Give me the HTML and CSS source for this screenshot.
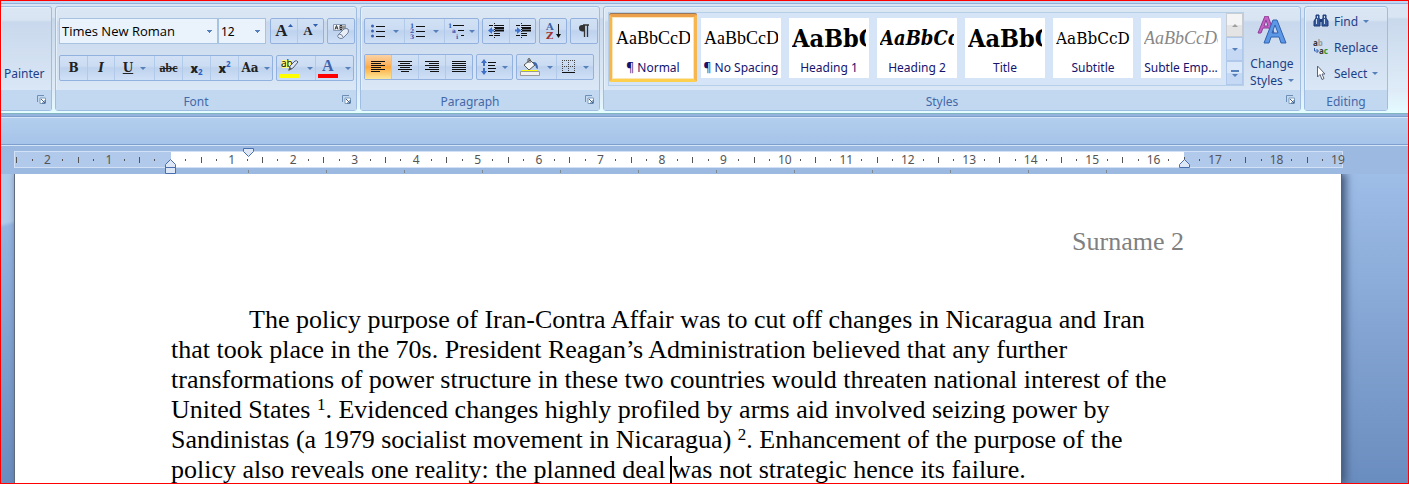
FILE: index.html
```
<!DOCTYPE html>
<html lang="en">
<head>
  <meta charset="UTF-8" />
  <meta name="viewport" content="width=device-width, initial-scale=1.0"/>
  <title>Document</title>
  <link rel="stylesheet" href="styles.css">
</head>
<body>

<header class="ribbon">
  <section class="group clipboard">
    <div class="group-body"><button class="link-btn">Painter</button></div>
    <div class="group-label"><button class="launcher" aria-label="Clipboard options"><svg width="9" height="9" viewBox="0 0 9 9"><path d="M.5 7V.5H7" fill="none" stroke="#6d8fb5"/><path d="M3 3h5.500v5.500H3z" fill="#fff" stroke="#7f9cbd"/><path d="M4 4l4 4M8 5v3H5" stroke="#40658f" fill="none"/></svg></button></div>
  </section>

  <section class="group font">
    <div class="group-body">
      <div class="row">
        <div class="combos">
          <select class="font-name" aria-label="Font"><option>Times New Roman</option></select>
          <select class="font-size" aria-label="Font size"><option>12</option></select>
        </div>
        <div class="set">
          <button class="b26" aria-label="Grow font"><span class="serif big">A</span><svg class="caret" width="5" height="3" viewBox="0 0 5 3"><path d="M0 3L2.500 0 5 3z" fill="#2f5fae"/></svg></button>
          <button class="b26" aria-label="Shrink font"><span class="serif small">A</span><svg class="caret" width="5" height="3" viewBox="0 0 5 3"><path d="M0 0L2.500 3 5 0z" fill="#2f5fae"/></svg></button>
        </div>
        <div class="set">
          <button class="b26" aria-label="Clear formatting"><svg width="18" height="18" viewBox="0 0 18 18"><path d="M1.500 2.500h12v6h-12z" fill="#f4f8fd" stroke="#8a9db8"/><path d="M3 7.500l1.500-4L6 7.500M3.500 6h2M8 3.500h2v4H8zM8 5.500h2M12 3.500v4" fill="none" stroke="#333"/><path d="M6 13l6-6q2-1 4 0 1 2 0 4l-5 5q-2 1-4 0-2-1-1-3z" fill="#e9eef6" stroke="#6e7f9c"/><path d="M7 12q3 0 4 3" fill="none" stroke="#6e7f9c"/></svg></button>
        </div>
      </div>
      <div class="row">
        <div class="set">
          <button class="b27 serif"><b>B</b></button>
          <button class="b27 serif"><b><i>I</i></b></button>
          <button class="b40 serif"><b><u>U</u></b><span class="arrow"></span></button>
          <button class="b28 serif strike"><s>abc</s></button>
          <button class="b28 script"><b>x</b><sub>2</sub></button>
          <button class="b28 script"><b>x</b><sup>2</sup></button>
          <button class="b34 serif"><b>Aa</b><span class="arrow"></span></button>
        </div>
        <div class="set">
          <button class="b38" aria-label="Highlight"><svg width="20" height="20" viewBox="0 0 20 20"><path d="M2 2h10v8H2z" fill="#ffff7a"/><text x="1" y="9" class="hl">ab</text><path d="M9 12l1-4 5-5q2-1 3 1l-5 6z" fill="#dfe6f1" stroke="#4d5c78"/><path d="M8 13l2-4 2 2z" fill="#555"/><path d="M0 16h20v4H0z" fill="#ff0"/></svg><span class="arrow"></span></button>
          <button class="b38" aria-label="Font color"><svg width="20" height="20" viewBox="0 0 20 20"><text x="4" y="13" class="fc">A</text><path d="M0 16h20v4H0z" fill="#f00"/></svg><span class="arrow"></span></button>
        </div>
      </div>
    </div>
    <div class="group-label"><span>Font</span><button class="launcher" aria-label="Font options"><svg width="9" height="9" viewBox="0 0 9 9"><path d="M.5 7V.5H7" fill="none" stroke="#6d8fb5"/><path d="M3 3h5.500v5.500H3z" fill="#fff" stroke="#7f9cbd"/><path d="M4 4l4 4M8 5v3H5" stroke="#40658f" fill="none"/></svg></button></div>
  </section>

  <section class="group paragraph">
    <div class="group-body">
      <div class="row">
        <div class="set">
          <button class="b39" aria-label="Bullets"><svg width="16" height="16" viewBox="0 0 16 16"><g fill="#3a62b8"><circle cx="2.500" cy="3" r="1.500"/><circle cx="2.500" cy="8" r="1.500"/><circle cx="2.500" cy="13" r="1.500"/></g><path d="M6 3.500h9M6 8.500h9M6 13.500h9" stroke="#111"/></svg><span class="arrow"></span></button>
          <button class="b40" aria-label="Numbering"><svg width="16" height="16" viewBox="0 0 16 16"><g class="num"><text x="0" y="5">1</text><text x="0" y="10">2</text><text x="0" y="16">3</text></g><path d="M6 3.500h9M6 8.500h9M6 13.500h9" stroke="#111"/></svg><span class="arrow"></span></button>
          <button class="b34" aria-label="Multilevel list"><svg width="16" height="16" viewBox="0 0 16 16"><g class="num"><text x="0" y="5">1</text><text x="4" y="10">a</text><text x="8" y="16">i</text></g><path d="M5 2.500h11M10 7.500h6M13 12.500h3" stroke="#111"/></svg><span class="arrow"></span></button>
        </div>
        <div class="set">
          <button class="b26" aria-label="Decrease indent"><svg width="16" height="16" viewBox="0 0 16 16"><path d="M1 2.500h4M7 2.500h9M1 12.500h4M7 12.500h5" stroke="#111"/><path d="M7 5h9M7 7.500h9" stroke="#111" stroke-width="2"/><path d="M7 10.500h5" stroke="#111"/><path d="M6.500 0v16" stroke="#222" stroke-dasharray="1 1"/><path d="M0 7.500L4 4v2.500h2v2H4V11z" fill="#3f74d2"/></svg></button>
          <button class="b26" aria-label="Increase indent"><svg width="16" height="16" viewBox="0 0 16 16"><path d="M1 2.500h4M7 2.500h9M1 12.500h4M7 12.500h5" stroke="#111"/><path d="M7 5h9M7 7.500h9" stroke="#111" stroke-width="2"/><path d="M7 10.500h5" stroke="#111"/><path d="M6.500 0v16" stroke="#222" stroke-dasharray="1 1"/><path d="M6 7.500L2 4v2.500H0v2h2V11z" fill="#3f74d2"/></svg></button>
        </div>
        <div class="set">
          <button class="b26" aria-label="Sort"><svg width="17" height="18" viewBox="0 0 17 18"><text x="1" y="8" class="sort-a">A</text><text x="1" y="17" class="sort-z">Z</text><path d="M13.500 2v12" stroke="#111"/><path d="M11 12h5l-2.500 4z" fill="#111"/></svg></button>
        </div>
        <div class="set">
          <button class="b26" aria-label="Show marks"><svg width="12" height="14" viewBox="0 0 12 14"><path d="M5 1h6M6.500 1v12M9.500 1v12" stroke="#333" stroke-width="1.300"/><path d="M6 1H4Q1 1 1 4t3 3.500h2z" fill="#333"/></svg></button>
        </div>
      </div>
      <div class="row">
        <div class="set">
          <button class="b26 active" aria-label="Align left"><svg width="14" height="12" viewBox="0 0 14 12"><path d="M0 .5h14M0 2.500h10M0 4.500h14M0 6.500h10M0 8.500h14M0 10.500h9" stroke="#111"/></svg></button>
          <button class="b27" aria-label="Center"><svg width="14" height="12" viewBox="0 0 14 12"><path d="M0 .5h14M2 2.500h10M0 4.500h14M2 6.500h10M0 8.500h14M3 10.500h8" stroke="#111"/></svg></button>
          <button class="b27" aria-label="Align right"><svg width="14" height="12" viewBox="0 0 14 12"><path d="M0 .5h14M4 2.500h10M0 4.500h14M4 6.500h10M0 8.500h14M5 10.500h9" stroke="#111"/></svg></button>
          <button class="b27" aria-label="Justify"><svg width="14" height="12" viewBox="0 0 14 12"><path d="M0 .5h14M0 2.500h14M0 4.500h14M0 6.500h14M0 8.500h14M0 10.500h14" stroke="#111"/></svg></button>
        </div>
        <div class="set">
          <button class="b35" aria-label="Line spacing"><svg width="16" height="16" viewBox="0 0 16 16"><path d="M3 0l3 4H4v3H2V4H0zM3 16l3-4H4V9H2v3H0z" fill="#3f6fc8"/><path d="M7 3.500h8M7 6.500h7M7 9.500h8M7 12.500h7" stroke="#111"/></svg><span class="arrow"></span></button>
        </div>
        <div class="set">
          <button class="b39" aria-label="Shading"><svg width="20" height="18" viewBox="0 0 20 18"><path d="M4 7l6-5 5 5-6 5z" fill="#f5f6f8" stroke="#555"/><path d="M8 5V1q1-1 2 0v4" fill="none" stroke="#555"/><path d="M13 4q5-1 5 7l-2-1q0-3-3-4z" fill="#3f67ad"/><path d="M2 12.500h15" stroke="#ff0"/><path d="M.5 13.500h19v4H.5z" fill="#eee" stroke="#999"/></svg><span class="arrow"></span></button>
          <button class="b37" aria-label="Borders"><svg width="14" height="14" viewBox="0 0 14 14"><path d="M.5 0v12M6.500 0v12M12.500 0v12M0 .5h13M0 6.500h13" stroke="#444" stroke-dasharray="1 1"/><path d="M0 12.500h13" stroke="#111"/></svg><span class="arrow"></span></button>
        </div>
      </div>
    </div>
    <div class="group-label"><span>Paragraph</span><button class="launcher" aria-label="Paragraph options"><svg width="9" height="9" viewBox="0 0 9 9"><path d="M.5 7V.5H7" fill="none" stroke="#6d8fb5"/><path d="M3 3h5.500v5.500H3z" fill="#fff" stroke="#7f9cbd"/><path d="M4 4l4 4M8 5v3H5" stroke="#40658f" fill="none"/></svg></button></div>
  </section>

  <section class="group styles">
    <div class="group-body">
      <div class="gallery">
        <button class="style selected"><span class="preview times">AaBbCcDc</span><span class="name">¶ Normal</span></button>
        <button class="style"><span class="preview times">AaBbCcDc</span><span class="name">¶ No Spacing</span></button>
        <button class="style"><span class="preview heading">AaBbC</span><span class="name">Heading 1</span></button>
        <button class="style"><span class="preview heading-2">AaBbCc</span><span class="name">Heading 2</span></button>
        <button class="style"><span class="preview heading">AaBbC</span><span class="name">Title</span></button>
        <button class="style"><span class="preview subtitle">AaBbCcD</span><span class="name">Subtitle</span></button>
        <button class="style"><span class="preview subtle">AaBbCcDc</span><span class="name">Subtle Emp...</span></button>
        <div class="scroller">
          <button class="off" aria-label="Up"><span class="arrow up"></span></button>
          <button aria-label="Down"><span class="arrow"></span></button>
          <button aria-label="More"><span class="bar"></span><span class="arrow"></span></button>
        </div>
      </div>
      <button class="change">
        <svg width="30" height="28" viewBox="0 0 30 28"><path d="M1 17L8 0h3l6 17h-3l-2-5H6l-2 5zM7 10h4L9 4z" fill="#c561c4" stroke="#8d3d96"/><path d="M7 27L16 4h4l9 23h-5l-2-6h-8l-2 6zM15 17h6l-3-8z" fill="#5d98e6" stroke="#2f62b0"/></svg>
        <span>Change</span>
        <span>Styles <span class="arrow"></span></span>
      </button>
    </div>
    <div class="group-label"><span>Styles</span><button class="launcher" aria-label="Styles options"><svg width="9" height="9" viewBox="0 0 9 9"><path d="M.5 7V.5H7" fill="none" stroke="#6d8fb5"/><path d="M3 3h5.500v5.500H3z" fill="#fff" stroke="#7f9cbd"/><path d="M4 4l4 4M8 5v3H5" stroke="#40658f" fill="none"/></svg></button></div>
  </section>

  <section class="group editing">
    <div class="group-body">
      <button class="edit-btn"><svg width="16" height="16" viewBox="0 0 16 16"><path d="M3 2h3v3l1 2v6H1V8l2-3zM10 2h3v3l2 3v5H9V7l1-2z" fill="#35599c" stroke="#1f3c75"/><path d="M7 6h2v3H7z" fill="#1f3c75"/><path d="M3.500 6v5M11.500 6v5M4.500 3v2M11.500 3v2" stroke="#c7d8f3"/></svg>Find<span class="arrow"></span></button>
      <button class="edit-btn"><svg width="16" height="16" viewBox="0 0 16 16"><text x="0" y="7" class="rep">a<tspan fill="#999">b</tspan></text><text x="6" y="15" class="rep">a<tspan fill="#1e9a2c">c</tspan></text><path d="M1.500 9v3H5M3.500 10l2 2-2 2" fill="none" stroke="#2f5fae"/></svg>Replace</button>
      <button class="edit-btn"><svg width="16" height="16" viewBox="0 0 16 16"><path d="M4.500 1v11l2.500-2.500 2 5 2-1-2-4.500H12z" fill="#fff" stroke="#5b6478"/></svg>Select<span class="arrow"></span></button>
    </div>
    <div class="group-label"><span>Editing</span></div>
  </section>
</header>

<div class="toolbar"></div>

<div class="ruler">
  <div class="track">
    <div class="margin-left"></div>
    <div class="text-area"></div>
    <div class="margin-right"></div>
    <div class="scale" id="scale"></div>
  </div>
  <div class="tabs"></div>
  <svg class="marker first-line" width="11" height="9" viewBox="0 0 11 9"><path d="M.5.5h10v3l-5 5-5-5z" fill="#dde7f5" stroke="#4a6fae"/></svg>
  <svg class="marker left-indent" width="11" height="15" viewBox="0 0 11 15"><path d="M5.500.5l5 5v9H.5v-9z" fill="#dde7f5" stroke="#4a6fae"/><path d="M0 8.500h11" stroke="#4a6fae"/></svg>
  <svg class="marker right-indent" width="11" height="9" viewBox="0 0 11 9"><path d="M5.500.5l5 5v3H.5v-3z" fill="#dde7f5" stroke="#4a6fae"/></svg>
</div>

<main class="workspace">
  <article class="page">
    <div class="page-header">Surname 2</div>
    <p>
      <span class="line indent">The policy purpose of Iran-Contra Affair was to cut off changes in Nicaragua and Iran</span>
      <span class="line">that took place in the 70s. President Reagan’s Administration believed that any further</span>
      <span class="line">transformations of power structure in these two countries would threaten national interest of the</span>
      <span class="line">United States <sup>1</sup>. Evidenced changes highly profiled by arms aid involved seizing power by</span>
      <span class="line">Sandinistas (a 1979 socialist movement in Nicaragua) <sup>2</sup>. Enhancement of the purpose of the</span>
      <span class="line">policy also reveals one reality: the planned deal <span class="cursor"></span>was not strategic hence its failure.</span>
    </p>
  </article>
</main>

<script>
  // one cell per centimetre: half tick, dot, number, dot
  const scale = document.getElementById('scale');
  for (let n = -2; n <= 19; n++) {
    const label = n === 0 ? '' : Math.abs(n);
    scale.innerHTML += `<i class="tick"></i><i class="dot"></i><span>${label}</span>`;
    if (n < 19) scale.innerHTML += '<i class="dot"></i>';
  }
</script>

</body>
</html>
```
FILE: styles.css
```
* {
  box-sizing: border-box;
  margin: 0;
  padding: 0;
}

body {
  font-family: "Noto Sans", "Open Sans", sans-serif;
  font-size: 12px;
  color: #1e3f87;
  height: 100vh;
  border: 1px solid #f00;
  overflow: hidden;
  display: flex;
  flex-direction: column;
}

button {
  font: inherit;
  color: inherit;
  background: none;
  border: none;
  white-space: nowrap;
}

svg {
  flex: none;
}

/* ribbon */
.ribbon {
  display: flex;
  gap: 3px;
  padding: 5px 20px 2px 0;
  border-bottom: 1px solid #7fb4c0;
  background: linear-gradient(#c5d7ef 0, #d9e5f3 3px, #d9e5f3 16px, #c9d9ec 18px, #dfecf8 90px, #e4fbff 111px);
  box-shadow: inset 0 2px #c1d6f0, inset 0 3px #92b2dd;
}

.group {
  display: flex;
  flex-direction: column;
  height: 105px;
  border: 1px solid #9fbde0;
  border-radius: 3px;
  box-shadow: inset 1px 1px #e6f0fa;
  background: linear-gradient(#dce7f4 0, #d8e4f2 13px, #c9d8ec 15px, #d9e7f6 84px);
}

.clipboard {
  width: 51px;
  border-left: none;
  border-radius: 0 3px 3px 0;
}

.font {
  width: 302px;
}

.paragraph {
  width: 240px;
}

.styles {
  flex: 1;
  min-width: 0;
}

.editing {
  width: 84px;
}

.group-body {
  flex: 1;
}

.group-label {
  height: 20px;
  display: flex;
  align-items: center;
  padding-top: 2px;
  background: #c2d8f0;
  color: #4468a8;
}

.group-label span {
  flex: 1;
  text-align: center;
}

.launcher {
  width: 20px;
  height: 12px;
  margin-left: auto;
  display: flex;
  justify-content: center;
}

.link-btn {
  padding: 58px 0 0 3px;
}

.font .group-body,
.paragraph .group-body {
  display: flex;
  flex-direction: column;
  gap: 10px;
  padding: 11px 3px 0;
}

.font .group-body {
  gap: 11px;
}

.row {
  display: flex;
  gap: 3px;
}

.combos {
  display: flex;
  height: 26px;
}

.combos select {
  appearance: none;
  font: inherit;
  font-size: 12px;
  color: #000;
  border: 1px solid #a8c2e2;
  padding: 0 2px;
  background: linear-gradient(90deg, #5580ba, #5580ba) no-repeat right 5px top 11px / 5px 1px,
              linear-gradient(90deg, #5580ba, #5580ba) no-repeat right 6px top 12px / 3px 1px,
              linear-gradient(90deg, #5580ba, #5580ba) no-repeat right 7px top 13px / 1px 1px,
              #eaf2fb;
}

.combos .font-name {
  width: 159px;
  font-family: "Open Sans", sans-serif;
  font-size: 13px;
}

.combos .font-size {
  width: 48px;
  margin-right: 1px;
}

.set {
  display: flex;
  height: 26px;
  border: 1px solid #93b1de;
  border-radius: 2px;
  background: linear-gradient(#d2e1f4 0, #cbdcf3 10px, #bed2ee 12px, #cfe0f6);
}

.set button {
  display: flex;
  align-items: center;
  justify-content: center;
  gap: 7px;
  color: #222;
}

.set button + button {
  border-left: 1px solid #b2cae9;
}

.b26 { width: 26px; }
.b27 { width: 27px; }
.b28 { width: 28px; }
.b34 { width: 34px; }
.b35 { width: 35px; }
.b37 { width: 37px; }
.b38 { width: 38px; }
.b39 { width: 39px; }
.b40 { width: 40px; }

.set .active {
  background: linear-gradient(#fbd2a5, #fcb45e 10px, #fca93f 12px, #fde89a);
  border-radius: 1px;
}

.serif {
  font-family: "DejaVu Serif", serif;
  font-size: 12px;
}

.set .b34,
.set .b35 {
  gap: 5px;
}

.set .b26 .caret {
  align-self: flex-start;
  margin: 5px 0 0 -7px;
}

.big {
  font-family: "Liberation Serif", serif;
  font-weight: bold;
  font-size: 17px;
}

.small {
  font-family: "Liberation Serif", serif;
  font-weight: bold;
  font-size: 13px;
}

.set .strike {
  font-family: "Liberation Serif", serif;
  font-size: 12px;
  font-weight: bold;
}

.set .script {
  gap: 0;
  font-weight: bold;
}

.script sub,
.script sup {
  font-size: 8px;
  color: #2f5fc0;
  line-height: 8px;
}

.script sub {
  padding-top: 8px;
}

.script sup {
  padding-bottom: 8px;
}

.arrow {
  display: inline-block;
  border: 3px solid transparent;
  border-top-color: #5580ba;
  border-bottom: none;
}

.arrow.up {
  border-bottom: 3px solid #a0a0a0;
  border-top: none;
}

.hl { font: 10px "Noto Sans", sans-serif; fill: #111; }
.fc { font: bold 16px "Liberation Serif", serif; fill: #3f62a8; }
.num { font: bold 6px "DejaVu Serif", serif; fill: #3558b0; }
.sort-a { font: bold 10px "DejaVu Serif", serif; fill: #3f62a8; }
.sort-z { font: bold 10px "DejaVu Serif", serif; fill: #a03030; }
.rep { font: bold 8px "Noto Sans", sans-serif; fill: #333; }

/* styles gallery */
.styles .group-body {
  display: flex;
  padding: 5px 0 0 4px;
}

.gallery {
  flex: 1;
  min-width: 0;
  height: 74px;
  display: flex;
  border: 1px solid #b5cfe9;
  background: #d5e5f7;
}

.style {
  width: 88px;
  height: 68px;
  margin-top: 1px;
  border: 4px solid transparent;
  background: #fff;
  background-clip: padding-box;
  display: flex;
  flex-direction: column;
  color: #14146e;
}

.selected {
  border: 3px solid;
  border-color: #eda04c #f7b64f #fccf4e;
  border-radius: 2px;
  padding: 1px;
  box-shadow: inset 0 0 0 1px #fbe6b8, 0 -1px #98765a;
}

.preview {
  height: 40px;
  width: 74px;
  margin-left: 3px;
  line-height: 40px;
  overflow: hidden;
  text-align: left;
  color: #000;
}

.times {
  font-family: "Liberation Serif", serif;
  font-size: 18px;
}

.heading {
  font: bold 25px/42px "DejaVu Serif Condensed", "DejaVu Serif", serif;
}

.heading-2 {
  font: italic bold 20px/40px "DejaVu Serif Condensed", "DejaVu Serif", serif;
}

.subtitle {
  font: 17px/40px "DejaVu Serif Condensed", "DejaVu Serif", serif;
}

.subtle {
  font: italic 18px/40px "Liberation Serif", serif;
  color: #888;
}

.name {
  align-self: center;
  line-height: 20px;
}

.scroller {
  width: 17px;
  margin-left: auto;
  display: flex;
  flex-direction: column;
}

.scroller button {
  flex: 1;
  display: flex;
  flex-direction: column;
  gap: 2px;
  align-items: center;
  justify-content: center;
  border: 1px solid #b0c8ea;
  background: linear-gradient(#dbe8f9 50%, #c5d9f4 50%);
}

.scroller .off {
  background: linear-gradient(#f4f4f4 50%, #e4e4e4 50%);
  border-color: #c8cdd4;
}

.bar {
  width: 8px;
  height: 2px;
  background: #5580ba;
}

.change {
  width: 56px;
  display: flex;
  flex-direction: column;
  align-items: center;
  padding-top: 4px;
  line-height: 17px;
}

.change svg {
  margin-bottom: 11px;
}

.change .arrow {
  margin: 0 0 3px 2px;
}

.editing .group-body {
  padding: 1px 0 0 8px;
}

.edit-btn {
  height: 26px;
  display: flex;
  align-items: center;
  gap: 5px;
}

/* empty toolbar strip */
.toolbar {
  height: 32px;
  border-top: 2px solid #94b4dd;
  border-bottom: 1px solid #d5e4f6;
  background: linear-gradient(#7d9fcd 1px, #d5e4f6 1px, #d5e4f6 2px, #b3ceed 2px, #a6c3e9 28px, #7d9fcd 28px);
}

/* ruler */
.ruler {
  position: relative;
  height: 28px;
  padding: 5px 65px 0 13px;
  background: #9cbae1;
}

.track {
  position: relative;
  height: 17px;
  display: flex;
  border: 1px solid #d3e1f6;
}

.margin-left {
  width: 156px;
  background: #b1c9eb;
}

.text-area {
  flex: 1;
  background: #fff;
}

.margin-right {
  width: 158px;
  background: #b1c9eb;
}

.scale {
  position: absolute;
  left: -6px;
  top: 0;
  width: 1352px;
  height: 15px;
  display: grid;
  grid-template-columns: repeat(88, 1fr);
  align-items: center;
  justify-items: center;
  color: #555;
  line-height: 15px;
}

.tick {
  width: 1px;
  height: 6px;
  background: #555;
}

.dot {
  width: 1px;
  height: 2px;
  background: #555;
}

/* default tab stops */
.tabs {
  height: 3px;
  margin: 2px 160px 0 157px;
  background: repeating-linear-gradient(90deg, transparent 0, transparent 77px, #808890 77px, #808890 78px);
}

.marker {
  position: absolute;
}

.first-line {
  left: 242px;
  top: 2px;
}

.left-indent {
  left: 164px;
  top: 13px;
}

.right-indent {
  right: 218px;
  top: 13px;
}

/* document */
.workspace {
  flex: 1;
  min-height: 0;
  display: flex;
  padding: 0 67px 0 13px;
  background: linear-gradient(165deg, #b0cae9 48px, #a3c0e5 50px, transparent 52px) no-repeat 0 0 / 13px 60px,
              linear-gradient(#9ebde7, #6a8dbf);
}

.page {
  flex: 1;
  padding: 53px 157px 0 156px;
  border-left: 1px solid #5f6b7c;
  background: #fff;
  box-shadow: 1px 0 #56657c, 4px 0 8px 1px #44597c;
  font-family: "Liberation Serif", "Times New Roman", serif;
  font-size: 26px;
  line-height: 30px;
  color: #000;
}

.page-header {
  text-align: right;
  color: #808080;
  margin-bottom: 48px;
}

.line {
  display: block;
  white-space: nowrap;
}

.indent {
  padding-left: 78px;
}

.page sup {
  font-size: 17px;
  line-height: 0;
  vertical-align: 8px;
}

.cursor {
  display: inline-block;
  width: 2px;
  height: 28px;
  margin: 0 0 0 -2px;
  vertical-align: -6px;
  background: #000;
}
```
